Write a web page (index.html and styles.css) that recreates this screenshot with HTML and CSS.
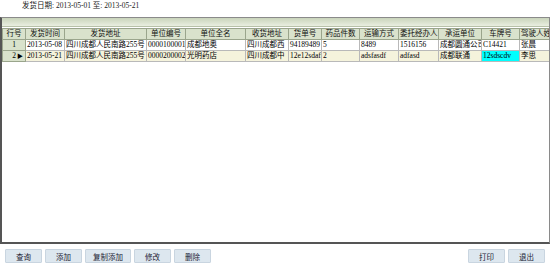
FILE: index.html
```html
<!DOCTYPE html>
<html lang="zh-CN">
<head>
    <meta charset="UTF-8">
    <title>发货查询</title>
    <link rel="stylesheet" href="styles.css">
</head>
<body>

    <!-- 查询条件 -->
    <div class="filter">发货日期: 2013-05-01 至: 2013-05-21</div>

    <div class="grid">
        <div class="grid-band"></div>
        <table class="data">
            <colgroup>
                <col style="width:23px">
                <col style="width:39px">
                <col style="width:82px">
                <col style="width:39px">
                <col style="width:60px">
                <col style="width:43px">
                <col style="width:33px">
                <col style="width:38px">
                <col style="width:39px">
                <col style="width:40px">
                <col style="width:43px">
                <col style="width:38px">
                <col style="width:32px">
            </colgroup>
            <thead>
                <tr>
                    <th>行号</th>
                    <th>发货时间</th>
                    <th>发货地址</th>
                    <th>单位编号</th>
                    <th>单位全名</th>
                    <th>收货地址</th>
                    <th>货单号</th>
                    <th>药品件数</th>
                    <th>运输方式</th>
                    <th>委托经办人</th>
                    <th>承运单位</th>
                    <th>车牌号</th>
                    <th>驾驶人姓名</th>
                </tr>
            </thead>
            <tbody>
                <tr>
                    <td class="rownum">1</td>
                    <td>2013-05-08</td>
                    <td>四川成都人民南路255号</td>
                    <td>00001000011</td>
                    <td>成都地奥</td>
                    <td>四川成都西</td>
                    <td>94189489</td>
                    <td>5</td>
                    <td>8489</td>
                    <td>1516156</td>
                    <td>成都圆通公司</td>
                    <td>C14421</td>
                    <td>张晨</td>
                </tr>
                <tr class="current">
                    <td class="rownum">2<span class="marker">&#9654;</span></td>
                    <td>2013-05-21</td>
                    <td>四川成都人民南路255号</td>
                    <td>00002000022</td>
                    <td>光明药店</td>
                    <td>四川成都中</td>
                    <td>12e12sdafv2</td>
                    <td>2</td>
                    <td>adsfasdf</td>
                    <td>adfasd</td>
                    <td>成都联通</td>
                    <td class="plate">12sdscdv</td>
                    <td>李思</td>
                </tr>
            </tbody>
        </table>
    </div>

    <div class="toolbar">
        <div class="group">
            <button class="btn">查询</button>
            <button class="btn">添加</button>
            <button class="btn wide">复制添加</button>
            <button class="btn">修改</button>
            <button class="btn">删除</button>
        </div>
        <div class="group">
            <button class="btn">打印</button>
            <button class="btn">退出</button>
        </div>
    </div>

</body>
</html>
```

FILE: styles.css
```css
body {
    margin: 0;
    width: 553px;
    height: 267px;
    overflow: hidden;
    background-color: #fff;
    color: #000;
    font-family: "Liberation Serif", "Noto Sans CJK SC", serif;
    font-size: 7.5px;
}
.filter {
    height: 17px;
    line-height: 12px;
    padding-left: 22px;
    color: #222;
}
.grid {
    height: 224px;
    margin: 0 3px 0 0;
    border: 1px solid #8a8a8a;
    border-left: 2px solid #555;
    border-bottom: 2px solid #555;
    overflow: hidden;
}
.grid-band {
    height: 8px;
    background: linear-gradient(#c9d4bb, #e9eee0);
    border-bottom: 1px solid #b7c1a8;
    margin-bottom: 1px;
}
table.data {
    border-collapse: collapse;
    table-layout: fixed;
    width: 549px;
}
.data th, .data td {
    height: 10px;
    padding: 0 1px;
    line-height: 10px;
    white-space: nowrap;
    overflow: hidden;
    border: 1px solid #b9b9b9;
}
.data th {
    font-weight: normal;
    background-color: #d9e2cc;
    border-color: #9aa58c;
    color: #111;
    text-align: center;
}
.data td {
    text-align: left;
}
.data td.rownum {
    position: relative;
    text-align: center;
    background-color: #d9e2cc;
    border-color: #9aa58c;
}
.marker {
    position: absolute;
    right: 2px;
    top: 0;
    font-size: 6px;
}
.data tr.current td {
    background-color: #f5f3dc;
}
.data tr.current td.rownum {
    background-color: #d9e2cc;
}
.data tr.current td.plate {
    background-color: #00ffff;
}
.toolbar {
    display: flex;
    justify-content: space-between;
    padding: 5px 8px 0 5px;
}
.group {
    display: flex;
    gap: 3px;
}
.btn {
    width: 37px;
    height: 14px;
    padding: 0;
    font-family: "Noto Sans CJK SC", sans-serif;
    font-size: 7.5px;
    color: #223;
    background-color: #dde7ef;
    border: 1px solid #c9d5e0;
    border-radius: 1px;
}
.btn.wide {
    width: 46px;
}
```
